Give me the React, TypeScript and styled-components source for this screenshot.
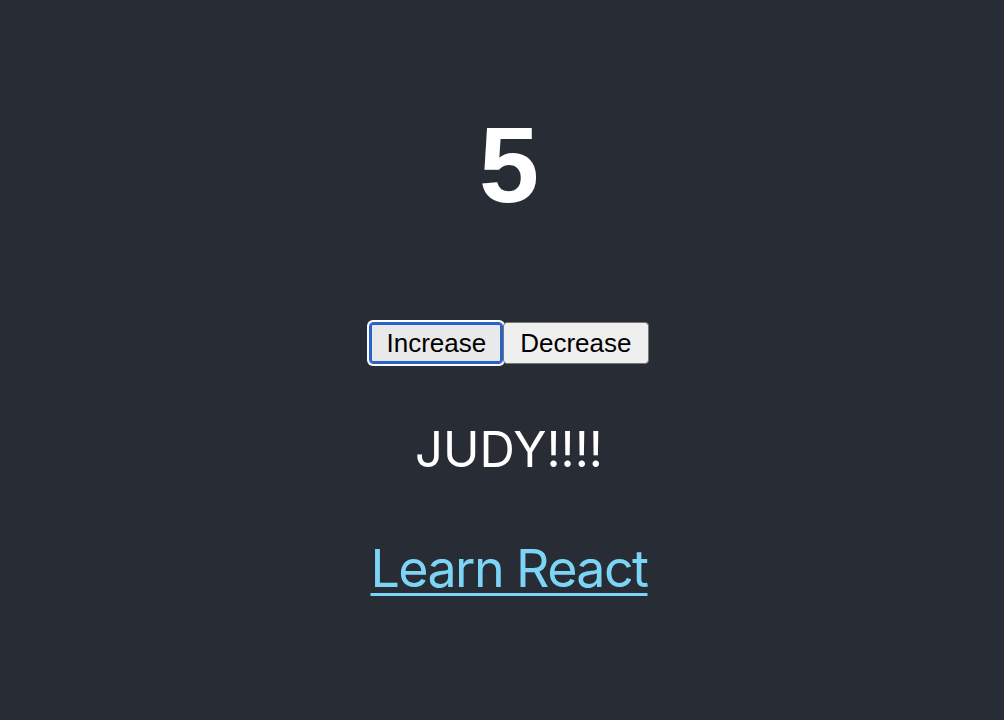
import React, { useState } from "react";
import styled, { createGlobalStyle } from "styled-components";

const GlobalStyle = createGlobalStyle`
  html, body {
    margin: 0;
    background: #282c34;
  }
`;

const Page = styled.div`
  min-height: 720px;
  box-sizing: border-box;
  display: flex;
  flex-direction: column;
  align-items: center;
  padding: 111px 0 0 14px;
  color: #ffffff;
  font-family: Inter, "Noto Sans", sans-serif;
`;

const Count = styled.h1`
  margin: 0;
  font-family: "Liberation Sans", Arial, sans-serif;
  font-weight: 700;
  font-size: 108px;
  line-height: 1;
`;

const ButtonRow = styled.div`
  display: flex;
  margin-top: 103px;
`;

const Button = styled.button<{ $focused?: boolean }>`
  box-sizing: border-box;
  height: 42px;
  margin: 0;
  padding: 0 16px;
  font-family: "Liberation Sans", Arial, sans-serif;
  font-size: 26px;
  line-height: 30px;
  color: #000;
  background: ${(p) => (p.$focused ? "#e9e9e9" : "#efefef")};
  border: 1px solid ${(p) => (p.$focused ? "#2a62cc" : "#767676")};
  border-radius: 4px;
  box-shadow: ${(p) =>
    p.$focused ? "inset 0 0 0 2px #2a62cc, 0 0 0 2px #ffffff" : "none"};
  outline: none;
  cursor: pointer;
`;

const Shout = styled.p`
  margin: 61px 0 0;
  font-size: 49px;
  line-height: 1;
  font-weight: 400;
`;

const Link = styled.a`
  margin-top: 69px;
  font-size: 52px;
  letter-spacing: -1.6px;
  line-height: 1;
  color: #7cd4f6;
  text-decoration: underline;
  text-decoration-thickness: 3px;
  text-underline-offset: 6px;
`;

const App = () => {
  const [count, setCount] = useState(5);

  return (
    <>
      <GlobalStyle />
      <Page>
        <Count>{count}</Count>
        <ButtonRow>
          <Button $focused onClick={() => setCount(count + 1)}>
            Increase
          </Button>
          <Button onClick={() => setCount(count - 1)}>Decrease</Button>
        </ButtonRow>
        <Shout>JUDY!!!!</Shout>
        <Link href="#" onClick={(e) => e.preventDefault()}>
          Learn React
        </Link>
      </Page>
    </>
  );
};

export default App;
